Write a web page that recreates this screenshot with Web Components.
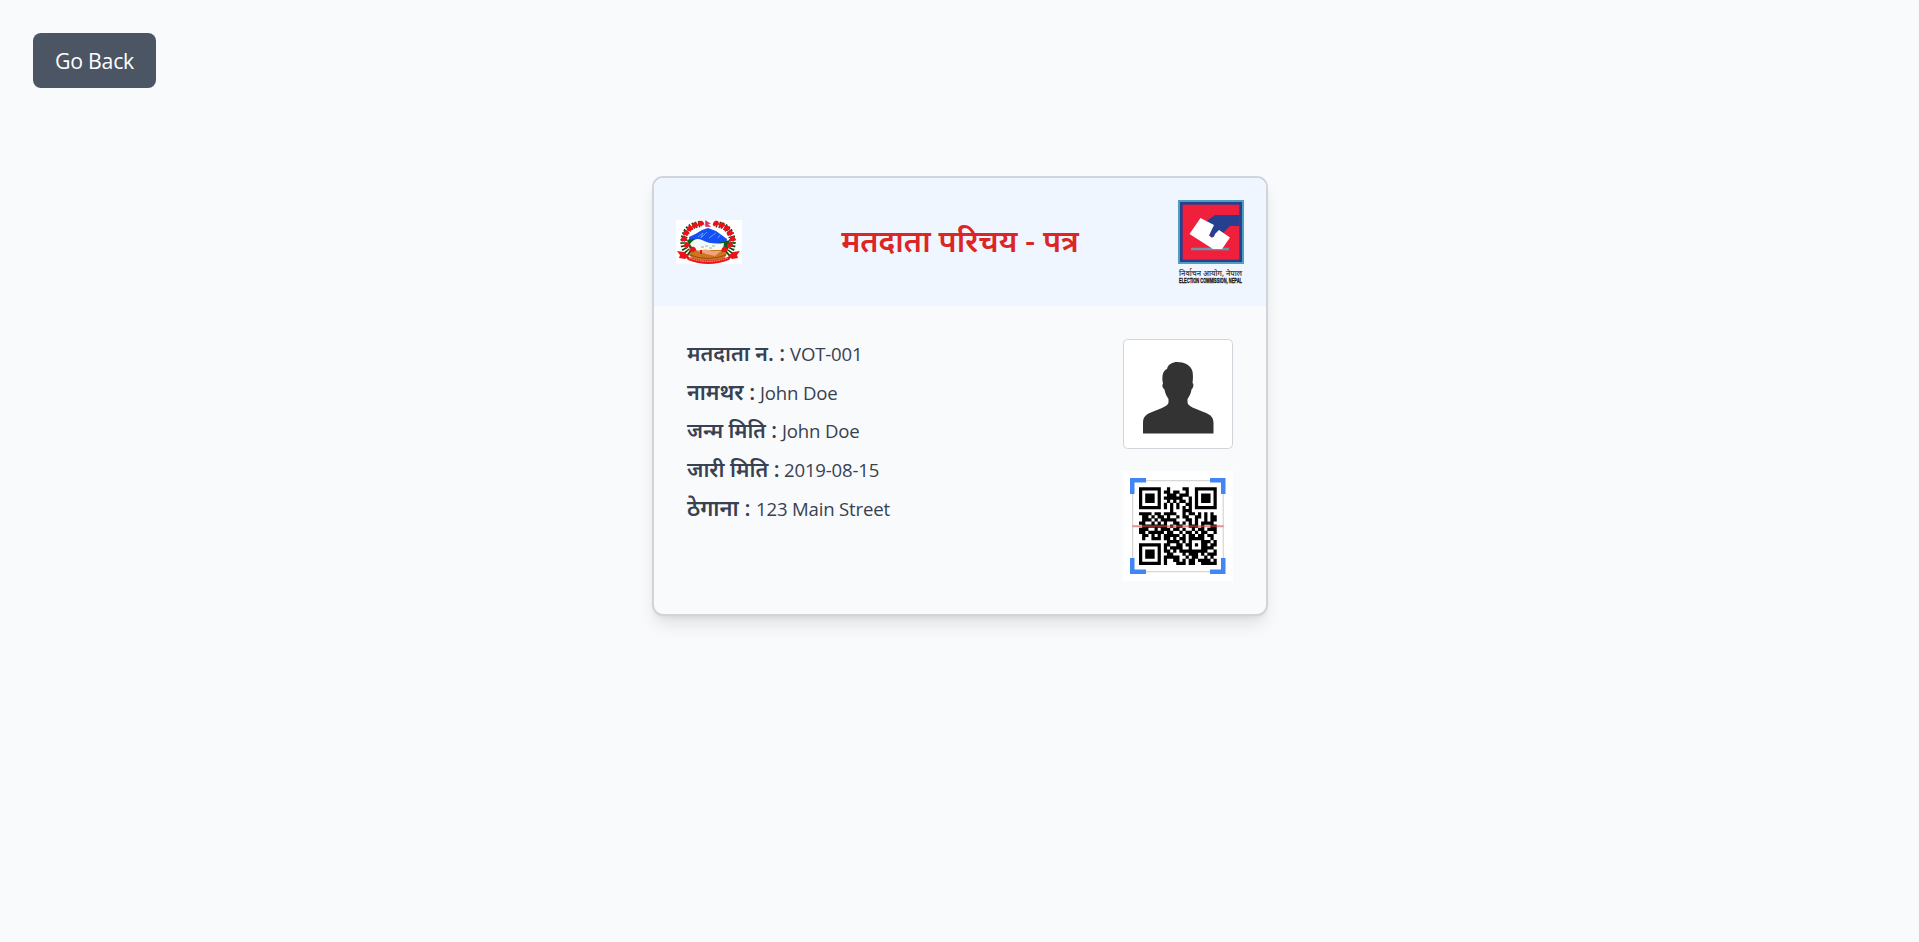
<!DOCTYPE html>
<html lang="ne">
<head>
<meta charset="utf-8">
<title>Voter Card</title>
<style>
  html, body { margin: 0; min-height: 100%; }
  body { background: #f9fafc; font-family: "Open Sans", "Noto Sans", "Noto Sans Devanagari", sans-serif; color: #374151; }
</style>
</head>
<body>
<voter-page></voter-page>
<script>
const define = (name, html, setup) => customElements.define(name, class extends HTMLElement {
  constructor() {
    super();
    const t = document.createElement('template');
    t.innerHTML = html;
    this.attachShadow({ mode: 'open' }).append(t.content.cloneNode(true));
  }
  connectedCallback() { if (setup) setup(this, this.shadowRoot); }
});

define('back-button', `
<style>
  :host { display: block; width: 123px; }
  button { display: block; width: 123px; height: 55px; padding: 1px 0 0; border: 0; border-radius: 8px; background: #4b5563; color: #fff; font: 400 21.300px/54px "Open Sans", sans-serif; letter-spacing: -0.25px; text-align: center; }
</style>
<button><slot></slot></button>`);

define('nepal-emblem', `
<style>:host { display: block; width: 66px; height: 44px; background: #fff; } svg { display: block; }</style>
<svg width="66" height="44" viewBox="0 0 66 44">
  <path d="M13 17 Q20 14 26 10 L32 8 L40 11 L51 19 L50 27 L14 26Z" fill="#1450f5"/>
  <path d="M22 17l5-4-2 5 6-6M33 18l7-5M42 18l2-3" stroke="#76a9ff" stroke-width=".8" fill="none"/>
  <path d="M11 20 Q18 17 25 21 L38 24 L54 20 L52 29 L14 30Z" fill="#0a6217"/>
  <path d="M14 24 Q19 17 26 20 Q35 25 48 23 L47 30 Q31 34 17 29Z" fill="#f5fbf7"/>
  <path d="M25 27h3m1-1h3m1 2h3m0-2h3" stroke="#91b9a0" stroke-width="1"/>
  <path d="M14 28 Q20 32 29 30 L48 30 L52 32 L48 39 Q31 43 17 39 L12 34Z" fill="#c9781f"/>
  <path d="M22 31 Q30 28 36 31 L45 31 L39 36 L30 34Z" fill="#f4a27d"/>
  <path d="M25 30v4" stroke="#e41414" stroke-width="2"/>
  <path d="M14 35 Q32 42 50 35" fill="none" stroke="#a34717" stroke-width="1"/>
  <path d="M24 4 Q10 6 8 18 Q6 29 14 34M40 4 Q54 6 56 18 Q58 29 51 34" fill="none" stroke="#17491c" stroke-width="6.5" stroke-dasharray="1.6 1.4"/>
  <g id="flowers" fill="#ee1018"></g>
  <path d="M1 31l7 1 5 4-4 3-6-1 1-3zM64 31l-7 1-5 4 4 3 6-1-1-3z" fill="#f01018"/>
  <path d="M8 35 Q32 46 57 35 L53 40 Q32 48 12 40Z" fill="#e91518"/>
  <path d="M13 38 Q32 45 52 38" fill="none" stroke="#ffb2a5" stroke-width=".9" stroke-dasharray="1.5 .8"/>
  <path d="M29.500 .5l5 3.200h-3.500l3.500 2.800h-5z" fill="#e8285a" stroke="#c03068" stroke-width=".5"/>
</svg>`, (host, root) => {
  const g = root.getElementById('flowers');
  if (g.childNodes.length) return;
  [[25,3.5],[19,5],[14,8.5],[10,13],[8,19],[11,25],[17,29.5],[40,3.5],[46,5],[51,8.5],[54,13],[56.5,19],[54,25],[48.5,29.5]].forEach(([x, y]) => {
    const p = document.createElementNS('http://www.w3.org/2000/svg', 'path');
    p.setAttribute('d', `M${x-3.3} ${y+1}l1.100-2.800 2.200-1.100 2.300 1.100 1.200 2.800-1.800.5-1 1.600-1.400-1-1.300.8z`);
    g.append(p);
  });
});

define('election-logo', `
<style>:host { display: block; width: 66px; height: 84px; } svg { display: block; overflow: visible; }</style>
<svg width="66" height="84" viewBox="0 0 66 84">
  <rect width="66" height="64" fill="#4f9fbc"/>
  <rect x="2" y="2" width="62" height="60" fill="#263f8e"/>
  <rect x="4.7" y="4.7" width="56.6" height="55" fill="#f0203c"/>
  <path d="M28 21.5 L37 15 H61.5 V26 H52 L41 37 L34 38 L30 34Z" fill="#263f8e"/>
  <path d="M13 47.700h38v2.600H13z" fill="#6f93a8"/>
  <path d="M22.500 18 L36 25 L31 35.500 L33.500 37.500 Q36 38 37 34 L41 30 L52 37.500 L44 49 H35 L11.500 34Z" fill="#fff"/>
  <text x="1" y="75.500" textLength="63" lengthAdjust="spacingAndGlyphs" font-size="8" font-weight="600" fill="#444" font-family="Noto Sans, sans-serif">निर्वाचन आयोग, नेपाल</text>
  <text x="1" y="83.300" textLength="63" lengthAdjust="spacingAndGlyphs" font-size="7.500" font-weight="700" fill="#111" stroke="#111" stroke-width=".3" font-family="Liberation Sans, sans-serif">ELECTION COMMISSION, NEPAL</text>
</svg>`);

define('voter-photo', `
<style>:host { display: block; box-sizing: border-box; width: 110px; height: 110px; border: 1px solid #d1d5db; border-radius: 4.4px; background: #fff; } svg { display: block; }</style>
<svg width="108" height="108" viewBox="1 1 108 108">
  <path fill="#333" d="M20 94.5V84c0-7 4-9 9-11l10-4c4-2 6.500-3.500 6.500-6v-3c-2-3-3.500-6-4-9.500-2-1.500-2.800-4-1.500-6-.7-3-1-6.500 0-10 1-2.800 2.500-4 4-4.500C45 25 50 23 54 23c7 0 14 3 15.500 9.500.7 4 .5 8 0 11.500 1.700 1 .8 5-1 6.500-.4 3.500-2 6.500-4 9.500v3c0 2.500 2 3.700 5 5.500l11 4.500c6 2 10 4.500 10 11v10.500z"/>
</svg>`);

define('qr-code', `
<style>:host { display: block; width: 110px; height: 110px; background: #fff; } svg { display: block; }</style>
<svg width="110" height="110" viewBox="0 0 110 110">
  <rect x="9.700" y="9.700" width="90.500" height="91" fill="none" stroke="#ccc" stroke-width="1"/>
  <path fill="#4285f4" d="M7 7h16v4.500H11.500V23H7zM87 7h15.500v16H98V11.500H87zM7 87h4.500v11.500H23v4.500H7zM98 87h4.500v16H87v-4.500h11z"/>
  <path id="modules" fill="#000"/>
  <path d="M9.500 55.200h91" stroke="#d94a4a" stroke-opacity=".62" stroke-width="2"/>
</svg>`, (host, root) => {
  const rows = [
    '1111111001000011001111111',
    '1000001011011001001000001',
    '1011101001110111001011101',
    '1011101011111100101011101',
    '1011101001010110101011101',
    '1000001010101001101000001',
    '1111111010101010101111111',
    '0000000000100011100000000',
    '1111011011110010110101010',
    '0110101101001011001101011',
    '0111010111110001101001011',
    '1100101010011010101011110',
    '0111111110101100111010011',
    '1110010111011010010110111',
    '1101111101100101101011001',
    '0110101011111010110110110',
    '0100111011010110111110010',
    '0000000001111010100011101',
    '1111111011001101101011011',
    '1000001010111100100011110',
    '1011101011010111111111001',
    '1011101001100010111010111',
    '1011101011111001011001010',
    '1000001010011010110111101',
    '1111111010001110110011111'
  ];
  let d = '';
  rows.forEach((r, y) => [...r].forEach((c, x) => { if (c === '1') d += `M${x} ${y}h1.04v1.04h-1.04z`; }));
  const p = root.getElementById('modules');
  p.setAttribute('d', d);
  p.setAttribute('transform', 'translate(16 16.300) scale(3.105)');
});

define('card-field', `
<style>
  :host { display: flex; align-items: baseline; height: 38.5px; line-height: 28px; white-space: nowrap; color: #374151; }
  .label { flex: none; width: var(--label-width); font-size: var(--label-size, 21.300px); font-weight: 600; }
  .value { font-size: 18.600px; font-weight: 400; letter-spacing: -0.18px; }
</style>
<span class="label"><slot name="label"></slot></span><span class="value"><slot></slot></span>`);

define('voter-card', `
<style>
  :host { display: block; box-sizing: border-box; width: 616px; border: 2px solid #d1d5db; border-radius: 11px; background: #f9fafc; box-shadow: 0 11px 16.500px -3.300px rgba(0,0,0,.1), 0 4.400px 6.600px -4.400px rgba(0,0,0,.1); }
  header { display: flex; align-items: center; justify-content: space-between; height: 128px; box-sizing: border-box; padding: 22px; background: #eff6ff; border-radius: 9px 9px 0 0; }
  h1 { margin: 0 0 2px; color: #dc2626; font-size: 30.400px; line-height: 56px; font-weight: 600; white-space: nowrap; }
  .body { display: flex; justify-content: space-between; padding: 33px; }
  .media { display: grid; gap: 22px; }
</style>
<header><nepal-emblem></nepal-emblem><h1><slot name="title"></slot></h1><election-logo></election-logo></header>
<div class="body"><div><slot></slot></div><div class="media"><voter-photo></voter-photo><qr-code></qr-code></div></div>`);

define('voter-page', `
<style>
  :host { display: flex; flex-direction: column; box-sizing: border-box; height: 942px; padding: 33px; }
  voter-card { align-self: center; margin: 88px 0 0 1px; }
</style>
<back-button>Go Back</back-button>
<voter-card>
  <span slot="title">मतदाता परिचय - पत्र</span>
  <card-field style="--label-width:103px"><span slot="label">मतदाता न. :</span>VOT-001</card-field>
  <card-field style="--label-width:73px;--label-size:21.600px"><span slot="label">नामथर :</span>John Doe</card-field>
  <card-field style="--label-width:95px;--label-size:20.800px"><span slot="label">जन्म मिति :</span>John Doe</card-field>
  <card-field style="--label-width:97px"><span slot="label">जारी मिति :</span>2019-08-15</card-field>
  <card-field style="--label-width:69px;--label-size:22px"><span slot="label">ठेगाना :</span>123 Main Street</card-field>
</voter-card>`);
</script>
</body>
</html>
